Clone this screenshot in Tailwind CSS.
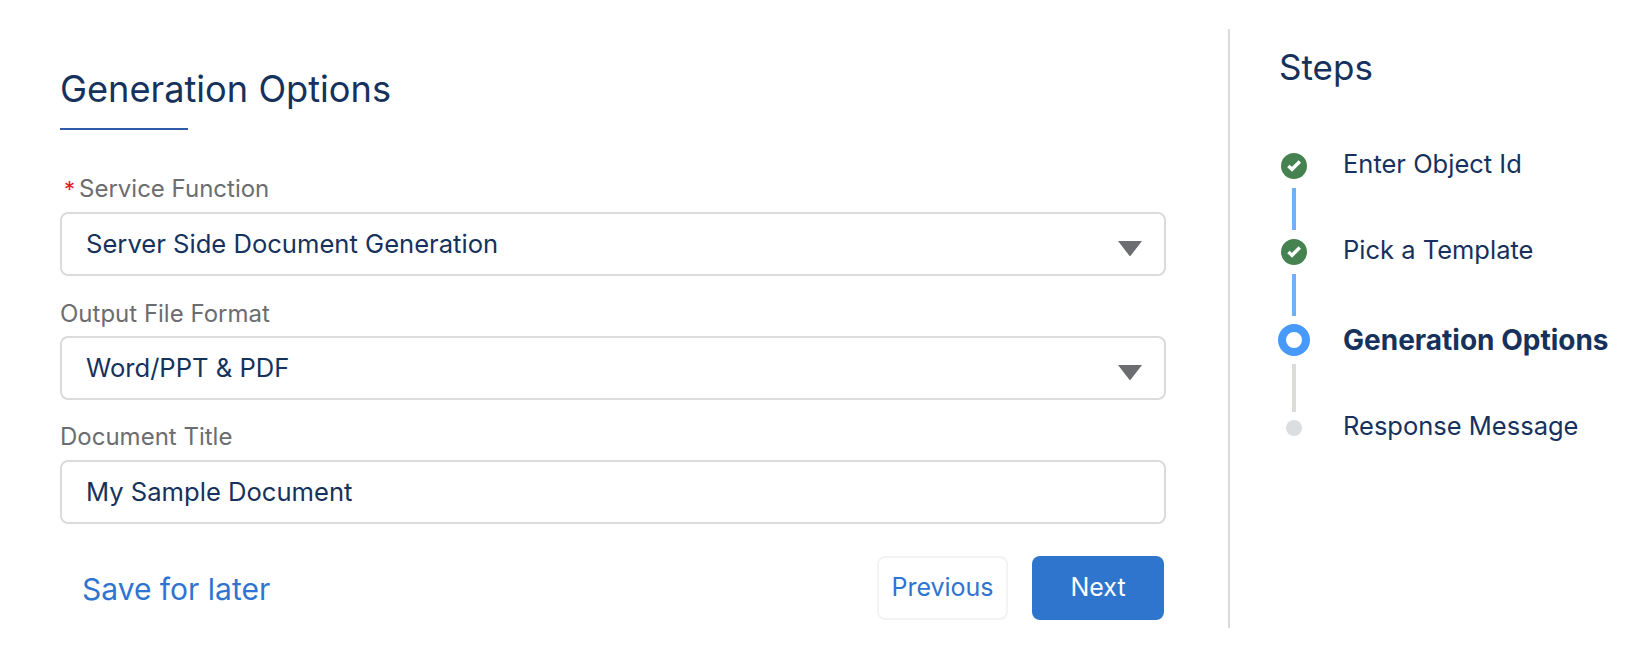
<!doctype html>
<html><head><meta charset="utf-8"><script src="https://cdn.jsdelivr.net/npm/@tailwindcss/browser@4"></script></head>
<body class="bg-white">
<div class="flex w-[1640px] h-[648px] pt-[29px] font-['Inter','Liberation_Sans',sans-serif] text-[#16325c] overflow-hidden">
  <main class="w-[1106px] ml-[60px] mr-[62px] shrink-0 pt-[38px]">
    <h1 class="text-[36.2px] leading-[44px] font-normal">Generation Options</h1>
    <div class="w-[128px] h-[2px] bg-[#2f5aa8] mt-[17px]"></div>
    <div class="mt-[45px] h-[28px] text-[24px] leading-[28px] text-[#6b6d70] flex"><span class="text-[#e02020] text-[22px] ml-[4px] mr-[4px]">*</span>Service Function</div>
    <div class="mt-[9px] h-[64px] border-2 border-[#dddbda] rounded-[8px] flex items-center justify-between pl-[24px] pr-[22px] text-[25.6px]">
      <span>Server Side Document Generation</span>
      <svg class="mt-[8px]" width="24" height="15" viewBox="0 0 24 15"><path d="M0 0H24L12.8 14.4a1 1 0 0 1-1.6 0Z" fill="#6b6d70"/></svg>
    </div>
    <div class="mt-[24px] h-[28px] text-[24px] leading-[28px] text-[#6b6d70]">Output File Format</div>
    <div class="mt-[8px] h-[64px] border-2 border-[#dddbda] rounded-[8px] flex items-center justify-between pl-[24px] pr-[22px] text-[25.6px]">
      <span>Word/PPT &amp; PDF</span>
      <svg class="mt-[8px]" width="24" height="15" viewBox="0 0 24 15"><path d="M0 0H24L12.8 14.4a1 1 0 0 1-1.6 0Z" fill="#6b6d70"/></svg>
    </div>
    <div class="mt-[23px] h-[28px] text-[24px] leading-[28px] text-[#6b6d70]">Document Title</div>
    <div class="mt-[9px] h-[64px] border-2 border-[#dddbda] rounded-[8px] flex items-center pl-[24px] text-[25.6px]">My Sample Document</div>
    <div class="mt-[32px] flex items-center justify-between pr-[2px]">
      <a class="ml-[22px] pt-[2px] text-[30px] text-[#2f74d0]">Save for later</a>
      <div class="flex gap-[24px]">
        <button class="w-[131px] h-[64px] border-2 border-[#f3f3f3] rounded-[8px] text-[25px] text-[#2f74d0]">Previous</button>
        <button class="w-[132px] h-[64px] rounded-[8px] bg-[#3075cd] text-[25px] text-white">Next</button>
      </div>
    </div>
  </main>
  <div class="w-[2px] h-[599px] bg-[#dddbda] shrink-0"></div>
  <aside class="pl-[49px] flex-1">
    <h2 class="text-[35px] leading-[44px] font-normal mt-[16px]">Steps</h2>
    <div class="mt-[64px] grid grid-cols-[30px_auto] gap-x-[34px] text-[25.5px] leading-[30px]">
      <div class="flex justify-center items-center h-[26px]">
        <svg width="26" height="26" viewBox="0 0 26 26"><circle cx="13" cy="13" r="13" fill="#45824f"/><path d="M7.4 12.9l3.6 3.4 7.8-7.8" fill="none" stroke="#fff" stroke-width="3.4"/></svg>
      </div>
      <div class="h-[26px] pb-[4px] flex items-center">Enter Object Id</div>
      <div class="flex justify-center h-[60px] pt-[9px]"><div class="w-[4px] h-[42px] bg-[#70b0f7]"></div></div><div></div>
      <div class="flex justify-center items-center h-[26px]">
        <svg width="26" height="26" viewBox="0 0 26 26"><circle cx="13" cy="13" r="13" fill="#45824f"/><path d="M7.4 12.9l3.6 3.4 7.8-7.8" fill="none" stroke="#fff" stroke-width="3.4"/></svg>
      </div>
      <div class="h-[26px] pb-[4px] flex items-center">Pick a Template</div>
      <div class="h-[59px] pt-[9px] flex justify-center"><div class="w-[4px] h-[42px] bg-[#70b0f7]"></div></div><div></div>
      <div class="flex justify-center items-center h-[32px]"><div class="w-[32px] h-[32px] shrink-0 rounded-full border-[8px] border-[#4799fc] bg-white"></div></div>
      <div class="h-[32px] flex items-center font-bold whitespace-nowrap text-[28px]">Generation Options</div>
      <div class="h-[64px] pt-[8px] flex justify-center"><div class="w-[4px] h-[48px] bg-[#dddbda]"></div></div><div></div>
      <div class="flex justify-center items-center h-[16px]"><div class="w-[16px] h-[16px] rounded-full bg-[#dcdde0]"></div></div>
      <div class="h-[16px] pb-[4px] flex items-center whitespace-nowrap">Response Message</div>
    </div>
  </aside>
</div>
</body></html>
